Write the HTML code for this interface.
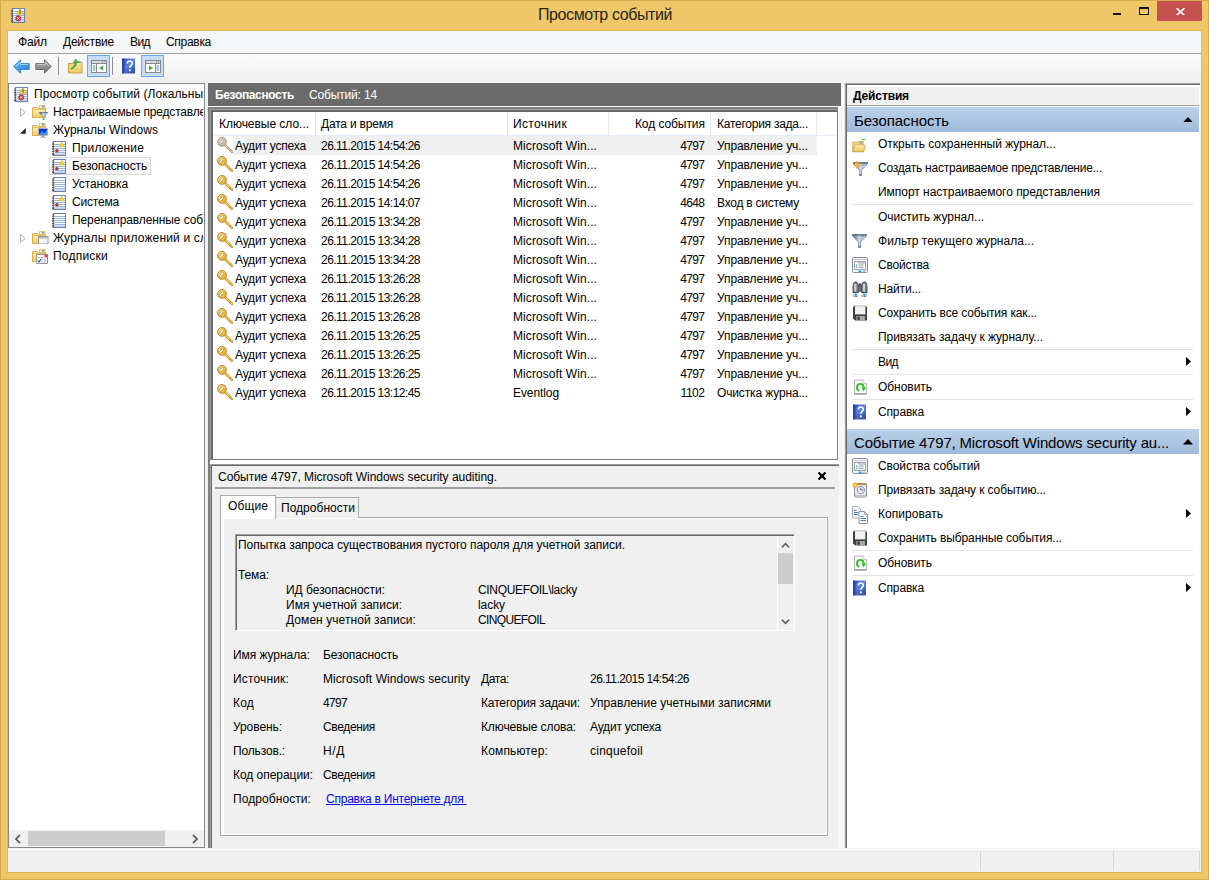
<!DOCTYPE html>
<html lang="ru"><head><meta charset="utf-8"><title>Просмотр событий</title>
<style>
html,body{margin:0;padding:0}
body{width:1209px;height:880px;overflow:hidden;position:relative;background:#efc768;font-family:"Liberation Sans",sans-serif;font-size:12px;color:#000}
div,span,svg{position:absolute;box-sizing:border-box}
.t{white-space:pre;display:block}
.ic{width:16px;height:16px;overflow:visible}
.hl{height:1px;background:#e3e3e3;left:852px;width:341px}
.tri{width:0;height:0;border-style:solid}
</style></head><body>
<svg style="width:0;height:0;left:0;top:0"><defs>
<linearGradient id="gFold" x1="0" y1="0" x2="0" y2="1"><stop offset="0" stop-color="#fbe9a8"/><stop offset="1" stop-color="#efc862"/></linearGradient>
<linearGradient id="gBlue" x1="0" y1="0" x2="1" y2="1"><stop offset="0" stop-color="#7cc4f5"/><stop offset="1" stop-color="#1877d2"/></linearGradient>
<linearGradient id="gGray" x1="0" y1="0" x2="0" y2="1"><stop offset="0" stop-color="#b9b9b9"/><stop offset="1" stop-color="#6f6f6f"/></linearGradient>
<linearGradient id="gHelp" x1="0" y1="0" x2="1" y2="1"><stop offset="0" stop-color="#2a47c4"/><stop offset=".5" stop-color="#5d86dc"/><stop offset="1" stop-color="#3a55b8"/></linearGradient>
<linearGradient id="gKey" x1="0" y1="0" x2="1" y2="1"><stop offset="0" stop-color="#fde27a"/><stop offset="1" stop-color="#e9a21c"/></linearGradient>
<linearGradient id="gFun" x1="0" y1="0" x2="1" y2="0"><stop offset="0" stop-color="#4d6880"/><stop offset=".5" stop-color="#c9d6e0"/><stop offset="1" stop-color="#5f7a92"/></linearGradient>
<symbol id="nb" viewBox="0 0 16 16"><rect x="2.5" y="1.5" width="12" height="14" fill="#fff" stroke="#6f7fb8"/><path d="M4 4.5h10M4 6.5h10M4 8.5h10M4 10.5h10M4 12.5h10M4 14.1h10" stroke="#86add9" stroke-width=".9"/><path d="M1 3h2.4M1 4.7h2.4M1 6.4h2.4M1 8.1h2.4M1 9.8h2.4M1 11.5h2.4M1 13.2h2.4M1 14.6h2.4" stroke="#5f5f5f" stroke-width="1.050"/></symbol>
<symbol id="nbw" viewBox="0 0 16 16"><use href="#nb"/><path d="M10.700 2.200L13.300 6.800H8.100z" fill="#f8d534" stroke="#e3b81d" stroke-width=".6"/><circle cx="5.900" cy="10.700" r="1.750" fill="#b92c37"/></symbol>
<symbol id="evt" viewBox="0 0 16 16"><use href="#nb"/><path d="M10 1.6L13.4 7.4H6.6z" fill="#f9d83a" stroke="#c9a019" stroke-width=".6"/><path d="M10 3.6v2.1M10 6.4v.6" stroke="#222" stroke-width="1"/><circle cx="8.3" cy="11.4" r="2.6" fill="#d9353f" stroke="#9c2028" stroke-width=".5"/><path d="M7.2 10.3l2.2 2.2M9.4 10.3l-2.2 2.2" stroke="#fff" stroke-width=".9"/></symbol>
<symbol id="fold" viewBox="0 0 16 16"><path d="M.5 3.500h5l1 1h7v9H.5z" fill="url(#gFold)" stroke="#d9b04e"/><path d="M7.500 1.500h5.500v3H7.500z" fill="#fdf3c8" stroke="#d9b04e" stroke-width=".8"/><rect x="9.800" y="2.200" width="2.400" height="1.300" fill="#3f8fe0"/><path d="M.5 5.800h13v7.700H.5z" fill="url(#gFold)" stroke="#d9b04e"/><path d="M1.200 6.600h11.600" stroke="#fdf2c4" stroke-width=".8"/></symbol>
<symbol id="funnel" viewBox="0 0 15 14"><path d="M.3.500h14.400v1.200L8.600 8v5.300H6.400V8L.3 1.700z" fill="url(#gFun)" stroke="#4f667a" stroke-width=".5"/><rect x=".3" y=".4" width="14.400" height="1.300" fill="#5a7088"/><path d="M9.500 5.500l3.600-3.300" stroke="#f3f7fa" stroke-width=".9"/><rect x="6.400" y="12.300" width="2.200" height="1.200" fill="#3d5268"/></symbol>
<symbol id="help" viewBox="0 0 14 16"><rect x="0" y="0" width="14" height="16" fill="url(#gHelp)"/><rect x="0" y="0" width="2.600" height="16" fill="#2338a8" opacity=".75"/><rect x="0" y="10" width="14" height="6" fill="#1e2f86" opacity=".25"/><path d="M5.700 5.200c0-3.400 5.300-3.400 5.300-.2 0 2.100-2.500 2.400-2.500 5" fill="none" stroke="#fff" stroke-width="1.700"/><circle cx="8.500" cy="12.700" r="1.100" fill="#fff"/></symbol>
<symbol id="key" viewBox="0 0 17 17"><path d="M9 9l7 6.800" stroke="#b8862b" stroke-width="2.500" stroke-linecap="round"/><path d="M9 9l7 6.800" stroke="#fbcb4c" stroke-width="1.300" stroke-linecap="round"/><path d="M13.600 14.900l1.300-1.200" stroke="#b8862b" stroke-width="1.100"/><circle cx="6" cy="5.900" r="4.400" fill="url(#gKey)" stroke="#b58a35" stroke-width="1"/><path d="M4.200 7.100L6.800 4.300" stroke="#9d8a60" stroke-width="2.500" stroke-linecap="round" opacity=".75"/><path d="M4.200 7.100L6.800 4.300" stroke="#fff" stroke-width="1.300" stroke-linecap="round"/></symbol>
<symbol id="props" viewBox="0 0 16 16"><rect x=".5" y=".5" width="15" height="15" rx="1" fill="#f4f5f7" stroke="#8d8f95"/><path d="M1 2.5h14" stroke="#c9ccd3"/><rect x="2.5" y="4.5" width="11" height="8" fill="#fff" stroke="#9aa0b4"/><path d="M2.5 4.5h4v1.5h7" fill="none" stroke="#9aa0b4"/><path d="M6.5 8h5M6.5 10.3h5" stroke="#8a8f9f"/><rect x="4" y="7.4" width="1.3" height="1.3" fill="#2ea5ef"/><rect x="4" y="9.7" width="1.3" height="1.3" fill="#2ea5ef"/><rect x="6.5" y="13.5" width="3" height="1.6" fill="#25a9f2"/><rect x="10.5" y="13.5" width="3" height="1.6" fill="#b8b8b8"/></symbol>
<symbol id="floppy" viewBox="0 0 16 16"><path d="M1 .8h14v14.7H3.2L1 13.6z" fill="#3c3f44"/><rect x="3" y=".8" width="10.4" height="8.6" fill="#f1f1f1"/><rect x="3" y=".8" width="10.4" height="1" fill="#dcdcdc"/><rect x="4.3" y="11" width="8.6" height="4.5" fill="#a9a9a9"/><rect x="5.4" y="11.6" width="2.4" height="3.3" fill="#3c3f44"/><rect x="0.6" y=".8" width="1.2" height="1.2" fill="#fff"/><rect x="14.2" y=".8" width="1.2" height="1.2" fill="#fff"/></symbol>
<symbol id="refresh" viewBox="0 0 14 16"><path d="M.5.500h9.300l3.700 3.700v11.300H.5z" fill="#fbfbfb" stroke="#a8a8a8"/><path d="M.5 15.500h13" stroke="#7d7d7d"/><path d="M9.800.5v3.700h3.700" fill="#fff" stroke="#b5b5b5" stroke-width=".8"/><path d="M5.570 11.780A3.600 3.600 0 1 1 10.350 8.700" fill="none" stroke="#42c232" stroke-width="2.300"/><path d="M7.900 8.600h5l-2.600 3.900z" fill="#35b526"/></symbol>
<symbol id="binoc" viewBox="0 0 16 16"><path d="M1 5.500c0-3 1.200-4.700 2.700-4.700s2.600 1.700 2.600 4.700v6H1z" fill="#7c838c" stroke="#3f444b" stroke-width=".9"/><path d="M9.700 5.500c0-3 1.200-4.700 2.700-4.700S15 2.500 15 5.500v6H9.700z" fill="#7c838c" stroke="#3f444b" stroke-width=".9"/><rect x="2.300" y="3" width="2" height="7.500" fill="#cfd3d8"/><rect x="11" y="3" width="2" height="7.500" fill="#cfd3d8"/><rect x="6.300" y="4.200" width="3.400" height="6" fill="#6d737c" stroke="#3f444b" stroke-width=".7"/><circle cx="8" cy="3.300" r="1.200" fill="#4d5259"/><path d="M1.300 11.800h4.800v2.400a2.400 1.600 0 0 1-4.800 0zM9.900 11.800h4.800v2.400a2.400 1.600 0 0 1-4.800 0z" fill="#f4faff"/><path d="M2.500 12.300l3.300 1.500-2.800 1.600z" fill="#1f93ea"/><path d="M11.100 12.300l3.300 1.500-2.800 1.600z" fill="#1f93ea"/><path d="M1 14.600c1.500 1.600 3.800 1.600 5.300 0M9.700 14.600c1.500 1.600 3.800 1.600 5.300 0" stroke="#3f444b" stroke-width="1" fill="none" stroke-dasharray="1.600 .9"/><path d="M1 11.700h5.300M9.700 11.700H15" stroke="#3f444b" stroke-width=".9"/></symbol>
<symbol id="copy" viewBox="0 0 17 18"><path d="M.5.500h5.500l2.500 2.500v9H.5z" fill="#fdfdfd" stroke="#a9adb5"/><path d="M2 4.500h2.500M2 6.500h4.500M2 8.500h4.500" stroke="#3a7fd0" stroke-width="1"/><path d="M7 5.500h5.500l3 3V17.500H7z" fill="#fdfdfd" stroke="#8f95a0"/><path d="M12.500 5.500v3h3" fill="none" stroke="#8f95a0" stroke-width=".8"/><path d="M8.500 10.500h3M8.500 12.500h5.500M8.500 14.500h5.500" stroke="#3a7fd0" stroke-width="1"/></symbol>
<symbol id="task" viewBox="0 0 16 16"><rect x="2.500" y="1.500" width="12" height="13.500" rx="1" fill="#ececec" stroke="#8c8c8c"/><rect x="2.500" y="1.500" width="12" height="1.600" fill="#c98c4a"/><rect x="3" y="13" width="11" height="2" fill="#c4c4c4"/><circle cx="8.800" cy="8" r="3.700" fill="#f8fbff" stroke="#6f7f9a" stroke-width=".9"/><path d="M8.800 5.600V8h2.300" stroke="#2b3f66" stroke-width=".9" fill="none"/><path d="M3 0v6M0 3h6M.9.900l4.200 4.200M5.100.9L.9 5.100" stroke="#f5a623" stroke-width="1"/><circle cx="3" cy="3" r="1.400" fill="#ffd04a"/></symbol>
<symbol id="openf" viewBox="0 0 16 16"><path d="M1.200 4.500h5.300l1-1h5l.4 1.500v9.500H1.500z" fill="#f1d588" stroke="#c9a14a" stroke-width=".8"/><rect x="8.800" y="4.500" width="2.300" height="1.300" fill="#3b8ce6"/><path d="M3.600 7.500h10l1.300 1.100-2.100 6.100H1.400z" fill="url(#gFold)" stroke="#c39a43" stroke-width=".8"/><path d="M3.900 8.300h9.500" stroke="#fdf4cf" stroke-width=".7"/><path d="M11 1.400h4" stroke="#4fd63a" stroke-width="1.300"/></symbol>
<symbol id="paneL" viewBox="0 0 16 13"><rect x=".5" y=".5" width="15" height="12" fill="#fff" stroke="#8a8a8a"/><rect x="1" y="1" width="14" height="2.200" fill="#d8d8d8"/><path d="M1 3.500h14" stroke="#8a8a8a"/><path d="M5.500 3.500v9" stroke="#8a8a8a"/><path d="M2 6h2.300M2 8h2.300M2 10h2.300" stroke="#4a7fd6" stroke-width="1"/><path d="M12 5.500v5L8 8z" fill="#3db53a"/><rect x="11" y="1.400" width="1" height="1" fill="#777"/><rect x="13" y="1.400" width="1" height="1" fill="#777"/></symbol>
<symbol id="paneR" viewBox="0 0 16 13"><rect x=".5" y=".5" width="15" height="12" fill="#fff" stroke="#8a8a8a"/><rect x="1" y="1" width="14" height="2.200" fill="#d8d8d8"/><path d="M1 3.500h14" stroke="#8a8a8a"/><path d="M10.500 3.500v9" stroke="#8a8a8a"/><path d="M11.700 6H14M11.700 8H14M11.700 10H14" stroke="#4a7fd6" stroke-width="1"/><path d="M4 5.500v5L8 8z" fill="#3db53a"/><rect x="11" y="1.400" width="1" height="1" fill="#777"/><rect x="13" y="1.400" width="1" height="1" fill="#777"/></symbol>
</defs></svg>

<!-- window frame -->
<div style="left:0;top:0;width:1209px;height:880px;border:1px solid #d4ab4e"></div>
<div style="left:7px;top:30px;width:1195px;height:843px;background:#dfb85c"></div>
<div style="left:8px;top:31px;width:1193px;height:841px;background:#f0f0f0"></div>
<svg class="ic" style="left:10px;top:7px"><use href="#evt"/></svg>
<!-- caption buttons -->
<div style="left:1113px;top:13px;width:8px;height:2px;background:#10131c"></div>
<div style="left:1139px;top:7px;width:10px;height:8px;border:1px solid #10131c;border-top-width:2px"></div>
<div style="left:1157px;top:1px;width:45px;height:20px;background:#c75050"></div>
<svg style="left:1175.500px;top:7.500px;width:9px;height:7.500px" viewBox="0 0 9 7.500"><path d="M.6.200L8.400 7.300M8.400.200L.6 7.300" stroke="#fff" stroke-width="1.700"/></svg>
<!-- menubar -->
<div style="left:8px;top:31px;width:1193px;height:22px;background:#f5f6f7"></div>
<div style="left:8px;top:53px;width:1193px;height:1px;background:#a0a0a0"></div>
<!-- toolbar -->
<div style="left:8px;top:54px;width:1193px;height:23px;background:linear-gradient(#fafafa,#f3f3f3)"></div>
<svg style="left:13px;top:59px;width:17px;height:15px" viewBox="0 0 17 15"><path d="M.6 7.500L7.500.8v3.700h8.700v6H7.500v3.700z" fill="url(#gBlue)" stroke="#2f86d9" stroke-width=".9"/><path d="M3 7.300l4.500-4.200v2.400h7.500" fill="none" stroke="#bfe4fb" stroke-width=".9" opacity=".8"/></svg>
<svg style="left:35px;top:59px;width:17px;height:15px" viewBox="0 0 17 15"><path d="M16.400 7.500L9.500.8v3.700H.8v6h8.700v3.700z" fill="url(#gGray)" stroke="#6b6b6b" stroke-width=".9"/><path d="M1.800 5.500h8.500V3.200l3.800 3.800" fill="none" stroke="#d9d9d9" stroke-width=".9" opacity=".7"/></svg>
<div style="left:58px;top:57px;width:1px;height:18px;background:#8c8c8c"></div>
<svg style="left:68px;top:58px;width:15px;height:16px" viewBox="0 0 15 16"><path d="M.5 5.500h4l1-1h8.500v10.500H.5z" fill="url(#gFold)" stroke="#c9a040"/><path d="M.5 7.500h13.500" stroke="#e8c66a" stroke-width=".7"/><rect x="10" y="3.300" width="2.600" height="1.200" fill="#3f8fe0"/><path d="M2.700 10.500c2.500-1 3.700-3 4-5.500l-1.700.3L7.700 1l2.600 3.400-1.600.2c-.2 3-1.800 5.200-5 6.800z" fill="#49b93c" stroke="#2f8f27" stroke-width=".5"/></svg>
<div style="left:87px;top:55px;width:23px;height:22px;background:#c5ddf6;border:1px solid #66a7e8"></div>
<svg style="left:91px;top:60px;width:16px;height:13px"><use href="#paneL"/></svg>
<div style="left:112px;top:57px;width:1px;height:18px;background:#8c8c8c"></div>
<svg style="left:122px;top:58px;width:13px;height:16px"><use href="#help"/></svg>
<div style="left:141px;top:55px;width:23px;height:22px;background:#c5ddf6;border:1px solid #66a7e8"></div>
<svg style="left:145px;top:60px;width:16px;height:13px"><use href="#paneR"/></svg>

<!-- tree pane -->
<div style="left:8px;top:83px;width:197px;height:765px;background:#fff;border:1px solid #828790"></div>
<svg class="ic" style="left:13px;top:86px"><use href="#evt"/></svg>
<svg style="left:20px;top:108px;width:6px;height:9px" viewBox="0 0 6 9"><path d="M.5.700L5.200 4.500.5 8.300z" fill="#fff" stroke="#a6a6a6" stroke-width=".9"/></svg>
<svg class="ic" style="left:31.500px;top:103.500px"><use href="#fold"/></svg>
<svg style="left:39px;top:112px;width:9px;height:8px"><use href="#funnel"/></svg>
<svg style="left:19.500px;top:128.300px;width:6px;height:6px" viewBox="0 0 7 7"><path d="M6.500.5v6h-6z" fill="#262626" stroke="#262626" stroke-width=".6"/></svg>
<svg class="ic" style="left:31.500px;top:121.500px"><use href="#fold"/></svg>
<svg style="left:38px;top:128px;width:10px;height:10px" viewBox="0 0 10 10"><rect x=".5" y=".5" width="9" height="6.500" fill="#1538c8" stroke="#9fb0c8"/><path d="M1 6.500L4 3l2 2 3-3v4.500z" fill="#4aa3f0" opacity=".75"/><path d="M4 7.500h2v1.200h2v.8H2v-.8h2z" fill="#8a8f97"/></svg>
<svg class="ic" style="left:51px;top:140px"><use href="#nbw"/></svg>
<div style="left:49px;top:157px;width:102px;height:18px;background:#f6f6f6;border:1px solid #dadada"></div>
<svg class="ic" style="left:51px;top:158px"><use href="#nbw"/></svg>
<svg class="ic" style="left:51px;top:176px"><use href="#nb"/></svg>
<svg class="ic" style="left:51px;top:194px"><use href="#nbw"/></svg>
<svg class="ic" style="left:51px;top:212px"><use href="#nb"/></svg>
<svg style="left:20px;top:234px;width:6px;height:9px" viewBox="0 0 6 9"><path d="M.5.700L5.200 4.500.5 8.300z" fill="#fff" stroke="#a6a6a6" stroke-width=".9"/></svg>
<svg class="ic" style="left:31.500px;top:229.500px"><use href="#fold"/></svg>
<svg style="left:38px;top:235.500px;width:10.500px;height:8.500px" viewBox="0 0 11 9"><rect x=".5" y=".5" width="10" height="8" fill="#f4f4f4" stroke="#8e8e8e"/><rect x="1" y="1" width="9" height="1.800" fill="#bdbdbd"/></svg>
<svg class="ic" style="left:31.500px;top:247.500px"><use href="#fold"/></svg>
<svg style="left:36px;top:254px;width:12px;height:10px" viewBox="0 0 12 10"><rect x=".5" y=".5" width="11" height="9" fill="#fff" stroke="#9a9a9a"/><rect x="8.500" y=".5" width="3" height="3" fill="#e8434f"/><path d="M2 3.500h1.500M5 3.500h1.500M5 6h1.500M8 6h1.500M8 8h1.500M5 8h1.500" stroke="#6a86c8" stroke-width="1"/><path d="M1.800 6.500l1.200 1.500 1.800-3" fill="none" stroke="#2458c5" stroke-width="1.100"/></svg>
<!-- tree h scrollbar -->
<div style="left:9px;top:830px;width:195px;height:17px;background:#f0f0f0"></div>
<div style="left:28px;top:831px;width:137px;height:15px;background:#cdcdcd"></div>
<svg style="left:14px;top:833.500px;width:8px;height:10px" viewBox="0 0 8 10"><path d="M6 1L2 5l4 4" fill="none" stroke="#505050" stroke-width="1.700"/></svg>
<svg style="left:191px;top:833.500px;width:8px;height:10px" viewBox="0 0 8 10"><path d="M2 1l4 4-4 4" fill="none" stroke="#505050" stroke-width="1.700"/></svg>

<!-- splitter 1 -->
<div style="left:208px;top:107px;width:2px;height:741px;background:#808080"></div>
<!-- center header -->
<div style="left:208px;top:83px;width:633px;height:22.500px;background:#6b6b6b"></div>
<div style="left:208px;top:105.500px;width:633px;height:1.500px;background:#fff"></div>
<!-- list box -->
<div style="left:208px;top:107px;width:631px;height:2px;background:#808080"></div>
<div style="left:838px;top:107px;width:3px;height:741px;background:#fafafa"></div>
<div style="left:210px;top:109px;width:628px;height:351px;background:#fff;border:1px solid #a0a0a0;border-right-color:#808080;border-bottom-color:#808080"></div>
<div style="left:211px;top:110px;width:626px;height:349px;border-left:2px solid #696969;border-top:2px solid #696969"></div>
<div style="left:213px;top:135px;width:624px;height:1px;background:#e3eefa"></div>
<div style="left:315px;top:112px;width:1px;height:23px;background:#e1ebf7"></div>
<div style="left:507px;top:112px;width:1px;height:23px;background:#e1ebf7"></div>
<div style="left:608px;top:112px;width:1px;height:23px;background:#e1ebf7"></div>
<div style="left:710px;top:112px;width:1px;height:23px;background:#e1ebf7"></div>
<div style="left:816px;top:112px;width:1px;height:23px;background:#e1ebf7"></div>
<div style="left:233px;top:136px;width:584px;height:19px;background:#efefef"></div>
<svg style="left:216px;top:136px;width:17px;height:17px; opacity:.8;filter:saturate(.35) brightness(.92);"><use href="#key"/></svg>
<svg style="left:216px;top:155px;width:17px;height:17px;"><use href="#key"/></svg>
<svg style="left:216px;top:174px;width:17px;height:17px;"><use href="#key"/></svg>
<svg style="left:216px;top:193px;width:17px;height:17px;"><use href="#key"/></svg>
<svg style="left:216px;top:212px;width:17px;height:17px;"><use href="#key"/></svg>
<svg style="left:216px;top:231px;width:17px;height:17px;"><use href="#key"/></svg>
<svg style="left:216px;top:250px;width:17px;height:17px;"><use href="#key"/></svg>
<svg style="left:216px;top:269px;width:17px;height:17px;"><use href="#key"/></svg>
<svg style="left:216px;top:288px;width:17px;height:17px;"><use href="#key"/></svg>
<svg style="left:216px;top:307px;width:17px;height:17px;"><use href="#key"/></svg>
<svg style="left:216px;top:326px;width:17px;height:17px;"><use href="#key"/></svg>
<svg style="left:216px;top:345px;width:17px;height:17px;"><use href="#key"/></svg>
<svg style="left:216px;top:364px;width:17px;height:17px;"><use href="#key"/></svg>
<svg style="left:216px;top:383px;width:17px;height:17px;"><use href="#key"/></svg>
<!-- detail pane -->
<div style="left:210px;top:460px;width:630px;height:4px;background:#fff"></div>
<div style="left:210px;top:464px;width:629px;height:384px;background:#f0f0f0;border-left:1px solid #a0a0a0;border-top:1px solid #a0a0a0"></div>
<div style="left:211px;top:465px;width:628px;height:383px;border-left:1px solid #696969;border-top:1px solid #696969"></div>
<svg style="left:817px;top:471px;width:10px;height:10px" viewBox="0 0 10 10"><path d="M1.500 1.500l7 7M8.500 1.500l-7 7" stroke="#000" stroke-width="2.200"/></svg>
<div style="left:215px;top:487px;width:620px;height:1.500px;background:#a0a0a0"></div>
<div style="left:220px;top:517px;width:608px;height:319px;background:#f0f0f0;border:1px solid #acacac"></div>
<div style="left:221px;top:518px;width:606px;height:317px;border:2px solid #fff;border-left-width:3px;border-top-width:1px;border-right-width:1px"></div>
<div style="left:275px;top:497px;width:84px;height:21px;background:#f0f0f0;border:1px solid #acacac;border-bottom:0"></div>
<div style="left:220px;top:495px;width:56px;height:24px;background:#fff;border:1px solid #acacac;border-bottom:0"></div>
<div style="left:235px;top:534px;width:560px;height:97px;background:#f0f0f0;border:1px solid #a0a0a0;border-right-color:#fff;border-bottom-color:#fff"></div>
<div style="left:236px;top:535px;width:558px;height:95px;border-left:1px solid #696969;border-top:1px solid #696969"></div>
<div style="left:777px;top:536px;width:1px;height:94px;background:#fff"></div>
<div style="left:778px;top:553px;width:15px;height:31px;background:#cdcdcd"></div>
<svg style="left:781px;top:542px;width:9px;height:7px" viewBox="0 0 10 8"><path d="M1 6l4-4 4 4" fill="none" stroke="#5a5a5a" stroke-width="1.900"/></svg>
<svg style="left:781px;top:618px;width:9px;height:7px" viewBox="0 0 10 8"><path d="M1 2l4 4 4-4" fill="none" stroke="#5a5a5a" stroke-width="1.900"/></svg>
<!-- splitter 2 / actions pane -->
<div style="left:841.500px;top:83px;width:2px;height:765px;background:#fff"></div>
<div style="left:843.500px;top:83px;width:1.500px;height:765px;background:#e6e6e6"></div>
<div style="left:845px;top:83px;width:354.500px;height:765px;background:#fff;border-left:1px solid #a0a0a0;border-top:1px solid #a0a0a0"></div>
<div style="left:846px;top:84px;width:353.500px;height:764px;border-left:1px solid #696969;border-top:1px solid #696969"></div>
<div style="left:847px;top:86.500px;width:352px;height:18.500px;background:#f0f0f0"></div>
<div style="left:847px;top:105px;width:352px;height:1px;background:#a3a3a3"></div>
<div style="left:847px;top:106.7px;width:352px;height:25.200px;background:linear-gradient(#bad1ea,#9fbada)"></div>
<svg style="left:1182.500px;top:116.800px;width:10px;height:5.500px" viewBox="0 0 10 5.500"><path d="M0 5.500L5 0l5 5.500z" fill="#000"/></svg>
<div style="left:847px;top:428.700px;width:352px;height:25.200px;background:linear-gradient(#bad1ea,#9fbada)"></div>
<svg style="left:1182.500px;top:439px;width:10px;height:5.500px" viewBox="0 0 10 5.500"><path d="M0 5.500L5 0l5 5.500z" fill="#000"/></svg>
<div class="hl" style="top:204px"></div>
<div class="hl" style="top:349px"></div>
<div class="hl" style="top:374px"></div>
<div class="hl" style="top:399px"></div>
<div class="hl" style="top:550px"></div>
<div class="hl" style="top:575px"></div>
<svg style="left:851px;top:137.600px;width:16px;height:15px" preserveAspectRatio="none"><use href="#openf"/></svg>
<svg style="left:853px;top:162px;width:15px;height:14px"><use href="#funnel"/></svg>
<svg style="left:853.300px;top:161px;width:7.500px;height:7.500px" viewBox="0 0 9 9"><path d="M4.500 0v9M0 4.500h9M1.300 1.300l6.400 6.400M7.700 1.300L1.300 7.700" stroke="#f7a420" stroke-width="1.100"/><circle cx="4.500" cy="4.500" r="2.300" fill="#ffb52e"/></svg>
<svg style="left:852px;top:234px;width:15px;height:14px"><use href="#funnel"/></svg>
<svg style="left:852px;top:257px;width:16px;height:16px"><use href="#props"/></svg>
<svg style="left:852px;top:281px;width:16px;height:16px"><use href="#binoc"/></svg>
<svg style="left:852px;top:305px;width:16px;height:16px"><use href="#floppy"/></svg>
<svg style="left:854px;top:379px;width:13px;height:16px"><use href="#refresh"/></svg>
<svg style="left:853px;top:404px;width:13px;height:16px"><use href="#help"/></svg>
<svg style="left:852px;top:458px;width:16px;height:16px"><use href="#props"/></svg>
<svg style="left:852px;top:482px;width:16px;height:16px"><use href="#task"/></svg>
<svg style="left:852px;top:506px;width:17px;height:18px"><use href="#copy"/></svg>
<svg style="left:852px;top:530px;width:16px;height:16px"><use href="#floppy"/></svg>
<svg style="left:854px;top:555px;width:13px;height:16px"><use href="#refresh"/></svg>
<svg style="left:853px;top:580px;width:13px;height:16px"><use href="#help"/></svg>
<svg style="left:1186px;top:357px;width:5px;height:9px" viewBox="0 0 5 9"><path d="M0 0l5 4.500L0 9z" fill="#000"/></svg>
<svg style="left:1186px;top:407px;width:5px;height:9px" viewBox="0 0 5 9"><path d="M0 0l5 4.500L0 9z" fill="#000"/></svg>
<svg style="left:1186px;top:509px;width:5px;height:9px" viewBox="0 0 5 9"><path d="M0 0l5 4.500L0 9z" fill="#000"/></svg>
<svg style="left:1186px;top:583px;width:5px;height:9px" viewBox="0 0 5 9"><path d="M0 0l5 4.500L0 9z" fill="#000"/></svg>
<!-- status bar -->
<div style="left:8px;top:849px;width:1193px;height:1px;background:#fff"></div>
<div style="left:980px;top:851px;width:1px;height:20px;background:#d7d7d7"></div>
<div style="left:1113px;top:851px;width:1px;height:20px;background:#d7d7d7"></div>
<div style="left:1199px;top:851px;width:1px;height:20px;background:#d7d7d7"></div>
<span class="t" style="left:538.00px;top:4.40px;font-size:16px;line-height:22px;color:#2a261c;letter-spacing:-0.404px;">Просмотр событий</span>
<span class="t" style="left:18.00px;top:33.00px;font-size:12px;line-height:18px;letter-spacing:-0.129px;">Файл</span>
<span class="t" style="left:63.00px;top:33.00px;font-size:12px;line-height:18px;letter-spacing:-0.221px;">Действие</span>
<span class="t" style="left:130.00px;top:33.00px;font-size:12px;line-height:18px;letter-spacing:-0.573px;">Вид</span>
<span class="t" style="left:166.00px;top:33.00px;font-size:12px;line-height:18px;letter-spacing:-0.297px;">Справка</span>
<span class="t" style="left:34.00px;top:85.00px;font-size:12px;line-height:18px;letter-spacing:0.048px;width:169px;overflow:hidden;">Просмотр событий (Локальный)</span>
<span class="t" style="left:53.00px;top:103.00px;font-size:12px;line-height:18px;letter-spacing:-0.199px;width:150px;overflow:hidden;">Настраиваемые представления</span>
<span class="t" style="left:53.00px;top:121.00px;font-size:12px;line-height:18px;letter-spacing:0.037px;">Журналы Windows</span>
<span class="t" style="left:72.00px;top:139.00px;font-size:12px;line-height:18px;letter-spacing:0.161px;">Приложение</span>
<span class="t" style="left:72.00px;top:157.00px;font-size:12px;line-height:18px;letter-spacing:-0.129px;">Безопасность</span>
<span class="t" style="left:72.00px;top:175.00px;font-size:12px;line-height:18px;letter-spacing:-0.080px;">Установка</span>
<span class="t" style="left:72.00px;top:193.00px;font-size:12px;line-height:18px;letter-spacing:-0.190px;">Система</span>
<span class="t" style="left:72.00px;top:211.00px;font-size:12px;line-height:18px;letter-spacing:-0.107px;width:131px;overflow:hidden;">Перенаправленные события</span>
<span class="t" style="left:53.00px;top:229.00px;font-size:12px;line-height:18px;letter-spacing:0.163px;width:150px;overflow:hidden;">Журналы приложений и служб</span>
<span class="t" style="left:53.00px;top:247.00px;font-size:12px;line-height:18px;letter-spacing:0.225px;">Подписки</span>
<span class="t" style="left:215.00px;top:86.00px;font-size:12px;line-height:18px;font-weight:700;color:#fff;letter-spacing:-0.354px;">Безопасность</span>
<span class="t" style="left:309.00px;top:86.00px;font-size:12px;line-height:18px;color:#fff;letter-spacing:-0.161px;">Событий: 14</span>
<span class="t" style="left:219.00px;top:115.00px;font-size:12px;line-height:18px;letter-spacing:-0.032px;">Ключевые сло...</span>
<span class="t" style="left:321.00px;top:115.00px;font-size:12px;line-height:18px;letter-spacing:-0.202px;">Дата и время</span>
<span class="t" style="left:513.00px;top:115.00px;font-size:12px;line-height:18px;letter-spacing:0.346px;">Источник</span>
<span class="t" style="left:634.93px;top:115.00px;font-size:12px;line-height:18px;letter-spacing:-0.068px;">Код события</span>
<span class="t" style="left:717.00px;top:115.00px;font-size:12px;line-height:18px;letter-spacing:-0.253px;">Категория зада...</span>
<span class="t" style="left:235.00px;top:137.00px;font-size:12px;line-height:18px;letter-spacing:-0.194px;">Аудит успеха</span>
<span class="t" style="left:321.00px;top:137.00px;font-size:12px;line-height:18px;letter-spacing:-0.538px;">26.11.2015 14:54:26</span>
<span class="t" style="left:513.00px;top:137.00px;font-size:12px;line-height:18px;letter-spacing:0.082px;">Microsoft Win...</span>
<span class="t" style="left:680.32px;top:137.00px;font-size:12px;line-height:18px;letter-spacing:-0.676px;">4797</span>
<span class="t" style="left:717.00px;top:137.00px;font-size:12px;line-height:18px;letter-spacing:-0.081px;">Управление уч...</span>
<span class="t" style="left:235.00px;top:156.00px;font-size:12px;line-height:18px;letter-spacing:-0.194px;">Аудит успеха</span>
<span class="t" style="left:321.00px;top:156.00px;font-size:12px;line-height:18px;letter-spacing:-0.538px;">26.11.2015 14:54:26</span>
<span class="t" style="left:513.00px;top:156.00px;font-size:12px;line-height:18px;letter-spacing:0.082px;">Microsoft Win...</span>
<span class="t" style="left:680.32px;top:156.00px;font-size:12px;line-height:18px;letter-spacing:-0.676px;">4797</span>
<span class="t" style="left:717.00px;top:156.00px;font-size:12px;line-height:18px;letter-spacing:-0.081px;">Управление уч...</span>
<span class="t" style="left:235.00px;top:175.00px;font-size:12px;line-height:18px;letter-spacing:-0.194px;">Аудит успеха</span>
<span class="t" style="left:321.00px;top:175.00px;font-size:12px;line-height:18px;letter-spacing:-0.538px;">26.11.2015 14:54:26</span>
<span class="t" style="left:513.00px;top:175.00px;font-size:12px;line-height:18px;letter-spacing:0.082px;">Microsoft Win...</span>
<span class="t" style="left:680.32px;top:175.00px;font-size:12px;line-height:18px;letter-spacing:-0.676px;">4797</span>
<span class="t" style="left:717.00px;top:175.00px;font-size:12px;line-height:18px;letter-spacing:-0.081px;">Управление уч...</span>
<span class="t" style="left:235.00px;top:194.00px;font-size:12px;line-height:18px;letter-spacing:-0.194px;">Аудит успеха</span>
<span class="t" style="left:321.00px;top:194.00px;font-size:12px;line-height:18px;letter-spacing:-0.538px;">26.11.2015 14:14:07</span>
<span class="t" style="left:513.00px;top:194.00px;font-size:12px;line-height:18px;letter-spacing:0.082px;">Microsoft Win...</span>
<span class="t" style="left:680.32px;top:194.00px;font-size:12px;line-height:18px;letter-spacing:-0.676px;">4648</span>
<span class="t" style="left:717.00px;top:194.00px;font-size:12px;line-height:18px;letter-spacing:-0.237px;">Вход в систему</span>
<span class="t" style="left:235.00px;top:213.00px;font-size:12px;line-height:18px;letter-spacing:-0.194px;">Аудит успеха</span>
<span class="t" style="left:321.00px;top:213.00px;font-size:12px;line-height:18px;letter-spacing:-0.538px;">26.11.2015 13:34:28</span>
<span class="t" style="left:513.00px;top:213.00px;font-size:12px;line-height:18px;letter-spacing:0.082px;">Microsoft Win...</span>
<span class="t" style="left:680.32px;top:213.00px;font-size:12px;line-height:18px;letter-spacing:-0.676px;">4797</span>
<span class="t" style="left:717.00px;top:213.00px;font-size:12px;line-height:18px;letter-spacing:-0.081px;">Управление уч...</span>
<span class="t" style="left:235.00px;top:232.00px;font-size:12px;line-height:18px;letter-spacing:-0.194px;">Аудит успеха</span>
<span class="t" style="left:321.00px;top:232.00px;font-size:12px;line-height:18px;letter-spacing:-0.538px;">26.11.2015 13:34:28</span>
<span class="t" style="left:513.00px;top:232.00px;font-size:12px;line-height:18px;letter-spacing:0.082px;">Microsoft Win...</span>
<span class="t" style="left:680.32px;top:232.00px;font-size:12px;line-height:18px;letter-spacing:-0.676px;">4797</span>
<span class="t" style="left:717.00px;top:232.00px;font-size:12px;line-height:18px;letter-spacing:-0.081px;">Управление уч...</span>
<span class="t" style="left:235.00px;top:251.00px;font-size:12px;line-height:18px;letter-spacing:-0.194px;">Аудит успеха</span>
<span class="t" style="left:321.00px;top:251.00px;font-size:12px;line-height:18px;letter-spacing:-0.538px;">26.11.2015 13:34:28</span>
<span class="t" style="left:513.00px;top:251.00px;font-size:12px;line-height:18px;letter-spacing:0.082px;">Microsoft Win...</span>
<span class="t" style="left:680.32px;top:251.00px;font-size:12px;line-height:18px;letter-spacing:-0.676px;">4797</span>
<span class="t" style="left:717.00px;top:251.00px;font-size:12px;line-height:18px;letter-spacing:-0.081px;">Управление уч...</span>
<span class="t" style="left:235.00px;top:270.00px;font-size:12px;line-height:18px;letter-spacing:-0.194px;">Аудит успеха</span>
<span class="t" style="left:321.00px;top:270.00px;font-size:12px;line-height:18px;letter-spacing:-0.538px;">26.11.2015 13:26:28</span>
<span class="t" style="left:513.00px;top:270.00px;font-size:12px;line-height:18px;letter-spacing:0.082px;">Microsoft Win...</span>
<span class="t" style="left:680.32px;top:270.00px;font-size:12px;line-height:18px;letter-spacing:-0.676px;">4797</span>
<span class="t" style="left:717.00px;top:270.00px;font-size:12px;line-height:18px;letter-spacing:-0.081px;">Управление уч...</span>
<span class="t" style="left:235.00px;top:289.00px;font-size:12px;line-height:18px;letter-spacing:-0.194px;">Аудит успеха</span>
<span class="t" style="left:321.00px;top:289.00px;font-size:12px;line-height:18px;letter-spacing:-0.538px;">26.11.2015 13:26:28</span>
<span class="t" style="left:513.00px;top:289.00px;font-size:12px;line-height:18px;letter-spacing:0.082px;">Microsoft Win...</span>
<span class="t" style="left:680.32px;top:289.00px;font-size:12px;line-height:18px;letter-spacing:-0.676px;">4797</span>
<span class="t" style="left:717.00px;top:289.00px;font-size:12px;line-height:18px;letter-spacing:-0.081px;">Управление уч...</span>
<span class="t" style="left:235.00px;top:308.00px;font-size:12px;line-height:18px;letter-spacing:-0.194px;">Аудит успеха</span>
<span class="t" style="left:321.00px;top:308.00px;font-size:12px;line-height:18px;letter-spacing:-0.538px;">26.11.2015 13:26:28</span>
<span class="t" style="left:513.00px;top:308.00px;font-size:12px;line-height:18px;letter-spacing:0.082px;">Microsoft Win...</span>
<span class="t" style="left:680.32px;top:308.00px;font-size:12px;line-height:18px;letter-spacing:-0.676px;">4797</span>
<span class="t" style="left:717.00px;top:308.00px;font-size:12px;line-height:18px;letter-spacing:-0.081px;">Управление уч...</span>
<span class="t" style="left:235.00px;top:327.00px;font-size:12px;line-height:18px;letter-spacing:-0.194px;">Аудит успеха</span>
<span class="t" style="left:321.00px;top:327.00px;font-size:12px;line-height:18px;letter-spacing:-0.538px;">26.11.2015 13:26:25</span>
<span class="t" style="left:513.00px;top:327.00px;font-size:12px;line-height:18px;letter-spacing:0.082px;">Microsoft Win...</span>
<span class="t" style="left:680.32px;top:327.00px;font-size:12px;line-height:18px;letter-spacing:-0.676px;">4797</span>
<span class="t" style="left:717.00px;top:327.00px;font-size:12px;line-height:18px;letter-spacing:-0.081px;">Управление уч...</span>
<span class="t" style="left:235.00px;top:346.00px;font-size:12px;line-height:18px;letter-spacing:-0.194px;">Аудит успеха</span>
<span class="t" style="left:321.00px;top:346.00px;font-size:12px;line-height:18px;letter-spacing:-0.538px;">26.11.2015 13:26:25</span>
<span class="t" style="left:513.00px;top:346.00px;font-size:12px;line-height:18px;letter-spacing:0.082px;">Microsoft Win...</span>
<span class="t" style="left:680.32px;top:346.00px;font-size:12px;line-height:18px;letter-spacing:-0.676px;">4797</span>
<span class="t" style="left:717.00px;top:346.00px;font-size:12px;line-height:18px;letter-spacing:-0.081px;">Управление уч...</span>
<span class="t" style="left:235.00px;top:365.00px;font-size:12px;line-height:18px;letter-spacing:-0.194px;">Аудит успеха</span>
<span class="t" style="left:321.00px;top:365.00px;font-size:12px;line-height:18px;letter-spacing:-0.538px;">26.11.2015 13:26:25</span>
<span class="t" style="left:513.00px;top:365.00px;font-size:12px;line-height:18px;letter-spacing:0.082px;">Microsoft Win...</span>
<span class="t" style="left:680.32px;top:365.00px;font-size:12px;line-height:18px;letter-spacing:-0.676px;">4797</span>
<span class="t" style="left:717.00px;top:365.00px;font-size:12px;line-height:18px;letter-spacing:-0.081px;">Управление уч...</span>
<span class="t" style="left:235.00px;top:384.00px;font-size:12px;line-height:18px;letter-spacing:-0.194px;">Аудит успеха</span>
<span class="t" style="left:321.00px;top:384.00px;font-size:12px;line-height:18px;letter-spacing:-0.538px;">26.11.2015 13:12:45</span>
<span class="t" style="left:513.00px;top:384.00px;font-size:12px;line-height:18px;letter-spacing:-0.088px;">Eventlog</span>
<span class="t" style="left:680.55px;top:384.00px;font-size:12px;line-height:18px;letter-spacing:-0.453px;">1102</span>
<span class="t" style="left:717.00px;top:384.00px;font-size:12px;line-height:18px;letter-spacing:-0.145px;">Очистка журна...</span>
<span class="t" style="left:218.00px;top:468.00px;font-size:12px;line-height:18px;letter-spacing:-0.030px;">Событие 4797, Microsoft Windows security auditing.</span>
<span class="t" style="left:228.00px;top:497.00px;font-size:12px;line-height:18px;letter-spacing:0.106px;">Общие</span>
<span class="t" style="left:281.00px;top:499.00px;font-size:12px;line-height:18px;letter-spacing:0.021px;">Подробности</span>
<span class="t" style="left:238.00px;top:536.00px;font-size:12px;line-height:18px;letter-spacing:-0.025px;">Попытка запроса существования пустого пароля для учетной записи.</span>
<span class="t" style="left:238.00px;top:566.00px;font-size:12px;line-height:18px;letter-spacing:-0.119px;">Тема:</span>
<span class="t" style="left:286.00px;top:581.00px;font-size:12px;line-height:18px;letter-spacing:-0.018px;">ИД безопасности:</span>
<span class="t" style="left:478.00px;top:581.00px;font-size:12px;line-height:18px;letter-spacing:-0.313px;">CINQUEFOIL\lacky</span>
<span class="t" style="left:286.00px;top:596.00px;font-size:12px;line-height:18px;letter-spacing:0.027px;">Имя учетной записи:</span>
<span class="t" style="left:478.00px;top:596.00px;font-size:12px;line-height:18px;letter-spacing:-0.069px;">lacky</span>
<span class="t" style="left:286.00px;top:611.00px;font-size:12px;line-height:18px;letter-spacing:0.066px;">Домен учетной записи:</span>
<span class="t" style="left:478.00px;top:611.00px;font-size:12px;line-height:18px;letter-spacing:-0.634px;">CINQUEFOIL</span>
<span class="t" style="left:233.00px;top:646.00px;font-size:12px;line-height:18px;letter-spacing:-0.060px;">Имя журнала:</span>
<span class="t" style="left:323.00px;top:646.00px;font-size:12px;line-height:18px;letter-spacing:-0.129px;">Безопасность</span>
<span class="t" style="left:233.00px;top:670.00px;font-size:12px;line-height:18px;letter-spacing:0.160px;">Источник:</span>
<span class="t" style="left:323.00px;top:670.00px;font-size:12px;line-height:18px;letter-spacing:0.062px;">Microsoft Windows security</span>
<span class="t" style="left:481.00px;top:670.00px;font-size:12px;line-height:18px;letter-spacing:-0.381px;">Дата:</span>
<span class="t" style="left:590.00px;top:670.00px;font-size:12px;line-height:18px;letter-spacing:-0.538px;">26.11.2015 14:54:26</span>
<span class="t" style="left:233.00px;top:694.00px;font-size:12px;line-height:18px;letter-spacing:0.198px;">Код</span>
<span class="t" style="left:323.00px;top:694.00px;font-size:12px;line-height:18px;letter-spacing:-0.676px;">4797</span>
<span class="t" style="left:481.00px;top:694.00px;font-size:12px;line-height:18px;letter-spacing:-0.136px;">Категория задачи:</span>
<span class="t" style="left:590.00px;top:694.00px;font-size:12px;line-height:18px;letter-spacing:0.020px;">Управление учетными записями</span>
<span class="t" style="left:233.00px;top:718.00px;font-size:12px;line-height:18px;letter-spacing:-0.070px;">Уровень:</span>
<span class="t" style="left:323.00px;top:718.00px;font-size:12px;line-height:18px;letter-spacing:-0.354px;">Сведения</span>
<span class="t" style="left:481.00px;top:718.00px;font-size:12px;line-height:18px;letter-spacing:-0.116px;">Ключевые слова:</span>
<span class="t" style="left:590.00px;top:718.00px;font-size:12px;line-height:18px;letter-spacing:-0.194px;">Аудит успеха</span>
<span class="t" style="left:233.00px;top:742.00px;font-size:12px;line-height:18px;letter-spacing:-0.153px;">Пользов.:</span>
<span class="t" style="left:323.00px;top:742.00px;font-size:12px;line-height:18px;letter-spacing:0.620px;">Н/Д</span>
<span class="t" style="left:481.00px;top:742.00px;font-size:12px;line-height:18px;letter-spacing:0.155px;">Компьютер:</span>
<span class="t" style="left:590.00px;top:742.00px;font-size:12px;line-height:18px;letter-spacing:0.230px;">cinquefoil</span>
<span class="t" style="left:233.00px;top:766.00px;font-size:12px;line-height:18px;letter-spacing:-0.042px;">Код операции:</span>
<span class="t" style="left:323.00px;top:766.00px;font-size:12px;line-height:18px;letter-spacing:-0.354px;">Сведения</span>
<span class="t" style="left:233.00px;top:790.00px;font-size:12px;line-height:18px;letter-spacing:0.076px;">Подробности:</span>
<span class="t" style="left:326.00px;top:790.00px;font-size:12px;line-height:18px;color:#0000ff;letter-spacing:-0.237px;text-decoration:underline;">Справка в Интернете для </span>
<span class="t" style="left:853.00px;top:87.00px;font-size:12px;line-height:18px;font-weight:700;letter-spacing:-0.133px;">Действия</span>
<span class="t" style="left:854.00px;top:109.50px;font-size:15px;line-height:21px;letter-spacing:-0.057px;">Безопасность</span>
<span class="t" style="left:854.00px;top:431.50px;font-size:15px;line-height:21px;letter-spacing:-0.176px;">Событие 4797, Microsoft Windows security au...</span>
<span class="t" style="left:878.00px;top:135.00px;font-size:12px;line-height:18px;letter-spacing:-0.025px;">Открыть сохраненный журнал...</span>
<span class="t" style="left:878.00px;top:159.00px;font-size:12px;line-height:18px;letter-spacing:-0.229px;">Создать настраиваемое представление...</span>
<span class="t" style="left:878.00px;top:183.00px;font-size:12px;line-height:18px;letter-spacing:-0.029px;">Импорт настраиваемого представления</span>
<span class="t" style="left:878.00px;top:208.00px;font-size:12px;line-height:18px;letter-spacing:-0.032px;">Очистить журнал...</span>
<span class="t" style="left:878.00px;top:232.00px;font-size:12px;line-height:18px;letter-spacing:0.028px;">Фильтр текущего журнала...</span>
<span class="t" style="left:878.00px;top:256.00px;font-size:12px;line-height:18px;letter-spacing:-0.213px;">Свойства</span>
<span class="t" style="left:878.00px;top:280.00px;font-size:12px;line-height:18px;letter-spacing:-0.156px;">Найти...</span>
<span class="t" style="left:878.00px;top:304.00px;font-size:12px;line-height:18px;letter-spacing:-0.143px;">Сохранить все события как...</span>
<span class="t" style="left:878.00px;top:328.00px;font-size:12px;line-height:18px;letter-spacing:-0.079px;">Привязать задачу к журналу...</span>
<span class="t" style="left:878.00px;top:353.00px;font-size:12px;line-height:18px;letter-spacing:-0.573px;">Вид</span>
<span class="t" style="left:878.00px;top:378.00px;font-size:12px;line-height:18px;letter-spacing:-0.043px;">Обновить</span>
<span class="t" style="left:878.00px;top:403.00px;font-size:12px;line-height:18px;letter-spacing:-0.154px;">Справка</span>
<span class="t" style="left:878.00px;top:457.00px;font-size:12px;line-height:18px;letter-spacing:-0.078px;">Свойства событий</span>
<span class="t" style="left:878.00px;top:481.00px;font-size:12px;line-height:18px;letter-spacing:-0.103px;">Привязать задачу к событию...</span>
<span class="t" style="left:878.00px;top:505.00px;font-size:12px;line-height:18px;letter-spacing:0.037px;">Копировать</span>
<span class="t" style="left:878.00px;top:529.00px;font-size:12px;line-height:18px;letter-spacing:-0.103px;">Сохранить выбранные события...</span>
<span class="t" style="left:878.00px;top:554.00px;font-size:12px;line-height:18px;letter-spacing:-0.043px;">Обновить</span>
<span class="t" style="left:878.00px;top:579.00px;font-size:12px;line-height:18px;letter-spacing:-0.154px;">Справка</span>
</body></html>
